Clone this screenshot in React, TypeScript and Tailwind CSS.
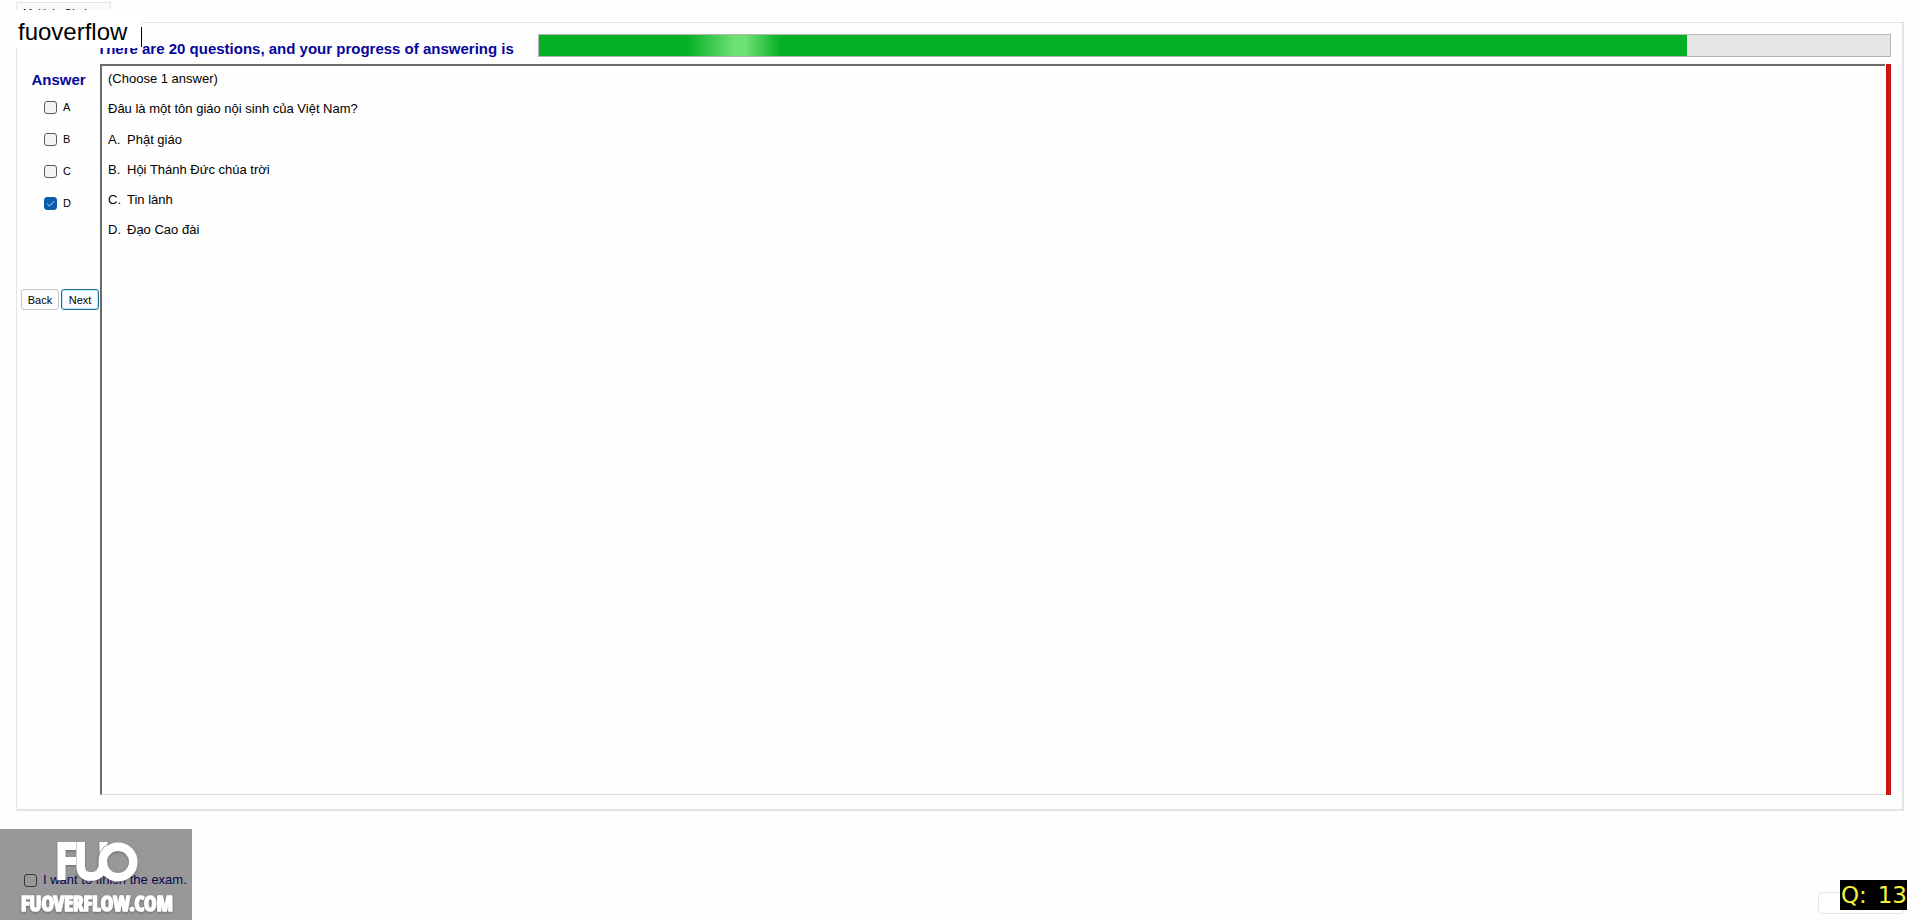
import { useState } from "react";

const TOTAL_QUESTIONS = 20;
const ANSWERED = 17;
const CHOICES = ["A", "B", "C", "D"];

const OPTIONS = [
  { key: "A", text: "Phật giáo" },
  { key: "B", text: "Hội Thánh Đức chúa trời" },
  { key: "C", text: "Tin lành" },
  { key: "D", text: "Đạo Cao đài" },
];

// Windows 11 style tick box: grey outline when empty, solid blue with a thin tick when checked.
const CHECKBOX = [
  "appearance-none size-[13px] shrink-0 rounded-[3px] border border-[#5c5c5c]",
  "checked:border-[#0a5cad] checked:bg-[#0a5cad]",
].join(" ");

function AnswerBox({ label, checked, onChange }: { label: string; checked: boolean; onChange: () => void }) {
  return (
    <label className="flex h-8 items-center gap-1.5 text-[11px] leading-4">
      <span className="relative flex">
        <input type="checkbox" checked={checked} onChange={onChange} className={`${CHECKBOX} bg-[#f4f4f4]`} />
        {checked && (
          <svg viewBox="0 0 13 13" className="pointer-events-none absolute inset-0 size-[13px]" fill="none" stroke="#b9dcf8" strokeWidth="1">
            <path d="M3.2 6.8 5.5 9l4.4-4.6" />
          </svg>
        )}
      </span>
      {label}
    </label>
  );
}

// Site watermark laid over the bottom-left corner of the window.
function Watermark() {
  return (
    <svg viewBox="0 0 192 91" className="pointer-events-none absolute bottom-0 left-0 h-[91px] w-48" role="img" aria-label="FUOVERFLOW.COM">
      <defs>
        <filter id="shade" x="-10%" y="-10%" width="120%" height="130%">
          <feDropShadow dx="0" dy="1" stdDeviation="1" floodColor="#444" floodOpacity="0.6" />
        </filter>
      </defs>
      <g filter="url(#shade)">
        <path d="M57.500 13H76v8H65.500v7H76v8H65.500v15h-8z" fill="#fff" />
        <path d="M80.700 13v24c0 7 4 10.500 10 10.500 8 0 12.500-5 12.500-14" fill="none" stroke="#fff" strokeWidth="8.500" />
        <path d="M99.500 13h8v9l-8 12z" fill="#fff" />
        <circle cx="118" cy="33" r="15.300" fill="none" stroke="#fff" strokeWidth="8.500" />
        <path d="M98 37a20.500 20.500 0 0 1 12-23" fill="none" stroke="#8d8d8d" strokeWidth="0.800" />
        <text x="21" y="82" fill="#fff" stroke="#fff" strokeWidth="1.600" strokeLinejoin="round" fontFamily="Open Sans Condensed, Roboto Condensed, Liberation Sans Narrow, Liberation Sans, sans-serif" fontWeight="700" fontSize="21">FUOVERFLOW.COM</text>
      </g>
    </svg>
  );
}

export default function App() {
  const [picked, setPicked] = useState<string[]>(["D"]);
  const [finish, setFinish] = useState(false);
  const toggle = (c: string) => setPicked((p) => (p.includes(c) ? p.filter((x) => x !== c) : [...p, c]));

  return (
    <div className="relative flex h-screen flex-col overflow-hidden bg-[#fefefe] pt-0.5 font-['Liberation_Sans',Arial,sans-serif] text-black">
      <div className="ml-4 flex">
        <button className="h-5 border border-b-0 border-[#e6e6e6] bg-[#fafafa] px-1.5 text-[11px] leading-4">Multiple Choices</button>
      </div>

      <main className="mr-4 ml-4 flex min-h-0 flex-1 flex-col border-t border-r-2 border-b-2 border-l border-[#e4e4e4] pr-[11px] pb-3.5">
        <header className="flex h-[41px] items-center pt-1 pl-20">
          <h1 id="progress-label" className="w-[441px] shrink-0 pt-1.5 text-[15px] leading-5 font-bold whitespace-nowrap text-[#06069c]">
            There are {TOTAL_QUESTIONS} questions, and your progress of answering is
          </h1>
          <div
            role="progressbar"
            aria-labelledby="progress-label"
            aria-valuemin={0}
            aria-valuemax={TOTAL_QUESTIONS}
            aria-valuenow={ANSWERED}
            className="h-[23px] flex-1 border border-[#b4b4b4] bg-[#e6e6e6]"
          >
            <div
              className="h-full bg-[#06b025] bg-[linear-gradient(to_right,transparent_13%,#6fe076_17%,#6fe076_18%,transparent_21%)]"
              style={{ width: `${(ANSWERED / TOTAL_QUESTIONS) * 100}%` }}
            />
          </div>
        </header>

        <div className="flex min-h-0 flex-1">
          <aside className="flex w-[83px] shrink-0 flex-col">
            <h2 className="pt-1.5 pb-px text-center text-[15px] leading-5 font-bold text-[#06069c]">Answer</h2>
            <div className="pl-[27px]">
              {CHOICES.map((c) => (
                <AnswerBox key={c} label={c} checked={picked.includes(c)} onChange={() => toggle(c)} />
              ))}
            </div>
            <div className="mt-[70px] flex gap-0.5 pl-1">
              <button className="h-[21px] w-[38px] rounded-[3px] border border-[#c8c8c8] bg-[#fdfdfd] text-[11px] leading-4">Back</button>
              <button className="h-[21px] w-[38px] rounded-[3px] border border-[#1d6f94] bg-[#fafdff] text-[11px] leading-4 shadow-[inset_0_0_0_1px_#c4e4f2]">Next</button>
            </div>
          </aside>

          <section className="min-w-0 flex-1 border-t-2 border-b border-l-2 border-t-[#6a6a6a] border-b-[#dedede] border-l-[#6a6a6a] pl-1.5 text-[13px] leading-5">
            <p className="pt-[3px]">(Choose 1 answer)</p>
            <p className="mt-2.5">Đâu là một tôn giáo nội sinh của Việt Nam?</p>
            <ol className="mt-[11px] flex flex-col gap-2.5">
              {OPTIONS.map((o) => (
                <li key={o.key} className="flex">
                  <span className="w-[19px]">{o.key}.</span>
                  {o.text}
                </li>
              ))}
            </ol>
          </section>
          <div className="ml-px w-[5px] bg-[#cc1414]" />
        </div>
      </main>

      <footer className="flex h-[109px] shrink-0 items-end justify-between pr-4 pb-1.5">
        <label className="mb-6 ml-6 flex items-center gap-1.5 text-[13px] leading-5 text-[#0a0a8c]">
          <input type="checkbox" checked={finish} onChange={() => setFinish(!finish)} className={CHECKBOX} />
          I want to finish the exam.
        </label>
        <button aria-label="Finish" className="h-[22px] w-[86px] rounded border border-[#e4e4e4] bg-white" />
      </footer>

      {/* overlays that sit on top of the exam window */}
      <div className="absolute top-2.5 left-2.5 h-[38px] w-[131px] bg-white pl-2 text-[24px] leading-[44px]">
        fuoverflow
      </div>
      <div className="absolute top-[27px] left-[141px] h-5 w-px bg-black" />
      <div className="absolute bottom-0 left-0 h-[91px] w-48 bg-black/40" />
      <Watermark />
      <div className="absolute right-[13px] bottom-2.5 flex h-[30px] w-[67px] justify-between overflow-hidden bg-black pl-px font-['DejaVu_Sans',sans-serif] text-[23px] leading-[30px] text-[#f4f03c]">
        <span>Q:</span> <span>13</span>
      </div>
    </div>
  );
}
